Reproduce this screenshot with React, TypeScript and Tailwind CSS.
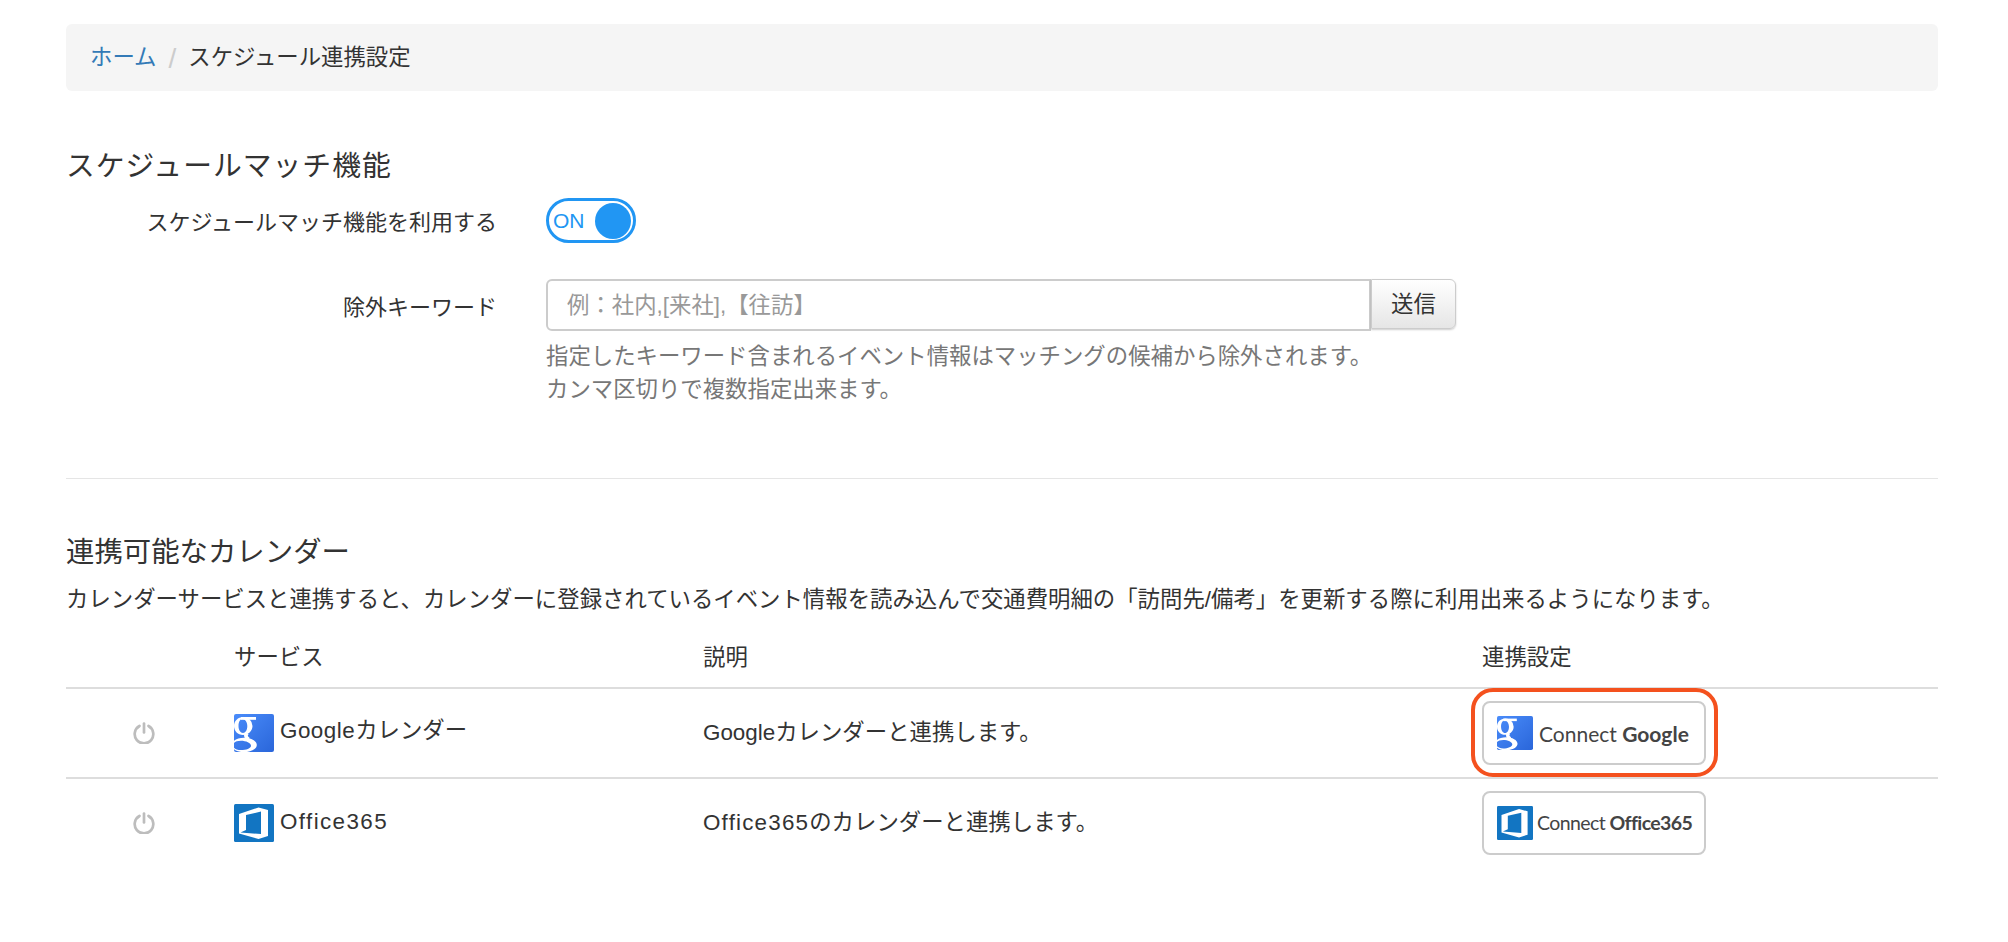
import React from "react";

const GoogleLogo = ({ w, h, id }: { w: number; h: number; id: string }) => (
  <svg width={w} height={h} viewBox="0 0 40 38" className="shrink-0">
    <defs>
      <linearGradient id={`grad${id}`} x1="0" y1="0" x2="1" y2="1">
        <stop offset="0" stopColor="#4a8cfa" />
        <stop offset="1" stopColor="#2a66da" />
      </linearGradient>
      <clipPath id={`clip${id}`}>
        <rect width="40" height="38" rx="2" />
      </clipPath>
    </defs>
    <g clipPath={`url(#clip${id})`}>
      <rect width="40" height="38" fill={`url(#grad${id})`} />
      <path fill="#fff" fillRule="evenodd" d="M9 3a9 9 0 0 1 9.500 9c0 5-4.500 9-9.500 9s-9-4-9-9 4-9 9-9zM8.500 5c-2.500 0-4 3-4 7s2 7 4.500 7 4.300-3 4.300-7S11 5 8.500 5z" />
      <rect x="7" y="3" width="15" height="2.800" fill="#fff" />
      <path d="M13 19c-2 2.500-1.500 4 1.500 6.500" fill="none" stroke="#fff" strokeWidth="4" />
      <path fill="#fff" fillRule="evenodd" d="M10 23.800c7 0 12.800 3.200 12.800 7.200S17 38.200 10 38.200-2.500 35-2.500 31 3 23.800 10 23.800zM7 26.800c-5 0-8 2-8 4.500s3 4.800 8 4.800 10-1.800 10-4.400-5-4.900-10-4.900z" />
    </g>
  </svg>
);

const OfficeLogo = ({ w, h }: { w: number; h: number }) => (
  <svg width={w} height={h} viewBox="0 0 40 38" className="shrink-0">
    <rect width="40" height="38" rx="1.500" fill="#1275c2" />
    <path fill="#fff" fillRule="evenodd" d="M5 10 24.500 3.500 34 6v26l-9.500 3L5 29.500zM12 11l15-3.500V30L6.500 28.500 12 26z" />
  </svg>
);

const Power = () => (
  <svg width="22" height="22" viewBox="0 0 22 22" fill="none" stroke="#bdbdbd" strokeWidth="2.700" strokeLinecap="round" className="shrink-0">
    <path d="M6.500 4a9.300 9.300 0 1 0 9 0" />
    <path d="M11 1.500v9" />
  </svg>
);

const rowGrid = "grid grid-cols-[168px_469px_779px_1fr] items-center";

export default function App() {
  return (
    <div className="min-h-[942px] bg-white pt-6 pl-[66px] pr-[70px] text-[22.4px] leading-none text-[#333] [font-family:'Liberation_Sans','Noto_Sans_CJK_JP',sans-serif]">
      <nav className="flex h-[67px] items-center rounded-md bg-[#f5f5f5] px-6 pt-[2px]">
        <a className="text-[#337ab7]">ホーム</a>
        <span className="mx-3 text-[28px] font-light text-[#ccc]">/</span>
        <span>スケジュール連携設定</span>
      </nav>

      <h2 className="mt-[55px] text-[28.8px] leading-[40px] tracking-[1px]">スケジュールマッチ機能</h2>

      <div className="mt-[12px] flex items-center">
        <div className="w-[431px] pt-[5px] text-right text-[22px]">スケジュールマッチ機能を利用する</div>
        <div className="ml-[49px] flex h-[45px] w-[90px] items-center justify-between rounded-full border-[3px] border-[#2196f3] pl-[4px] pr-[2px] text-[#2196f3]">
          <span className="text-[21px]">ON</span>
          <span className="h-[36px] w-[36px] rounded-full bg-[#2196f3]" />
        </div>
      </div>

      <div className="mt-9 flex">
        <div className="w-[431px] pt-[18px] text-right text-[22px]">除外キーワード</div>
        <div className="ml-[49px]">
          <div className="flex h-[52px] w-[910px]">
            <div className="flex flex-1 items-center rounded-l-md border-2 border-[#ccc] pl-[19px] pt-[3px] text-[#999]">例：社内,[来社],【往訪】</div>
            <div className="flex h-[50px] w-[85px] items-center justify-center rounded-r-md border border-[#ccc] bg-gradient-to-b from-white to-[#e6e6e6] pt-[3px] shadow-[0_1px_2px_rgba(0,0,0,0.2)]">送信</div>
          </div>
          <p className="mt-[9px] leading-[33px] text-[#777]">
            指定したキーワード含まれるイベント情報はマッチングの候補から除外されます。
            <br />
            カンマ区切りで複数指定出来ます。
          </p>
        </div>
      </div>

      <hr className="mt-[72px] border-t border-[#e5e5e5]" />

      <h2 className="mt-[53px] text-[28.4px] leading-[40px]">連携可能なカレンダー</h2>
      <p className="mt-[12px] leading-[32px]">カレンダーサービスと連携すると、カレンダーに登録されているイベント情報を読み込んで交通費明細の「訪問先/備考」を更新する際に利用出来るようになります。</p>

      <div className={`${rowGrid} mt-[11px] h-[62px] border-b-2 border-[#ddd] pt-[2px]`}>
        <span />
        <span>サービス</span>
        <span>説明</span>
        <span>連携設定</span>
      </div>

      <div className={`${rowGrid} h-[90px] border-b-2 border-[#ddd]`}>
        <span className="pl-[67px]"><Power /></span>
        <span className="flex items-center gap-[6px]">
          <GoogleLogo w={40} h={38} id="a" />
          <span className="-mt-[3px]"><span className="tracking-[0.5px]">Google</span>カレンダー</span>
        </span>
        <span>Googleカレンダーと連携します。</span>
        <div className="relative flex h-16 w-[224px] items-center rounded-lg border-2 border-[#ccc] pl-[13px]">
          <GoogleLogo w={36} h={36} id="b" />
          <span className="ml-[6px] text-[21px] text-[#444] [font-family:Lato,sans-serif]">Connect <b>Google</b></span>
          <span className="absolute -left-[13px] -right-[14px] -top-[15px] -bottom-[14px] rounded-[22px] border-4 border-[#f4511e]" />
        </div>
      </div>

      <div className={`${rowGrid} h-[88px]`}>
        <span className="pl-[67px]"><Power /></span>
        <span className="flex items-center gap-[6px]">
          <OfficeLogo w={40} h={38} />
          <span className="-mt-[2px] tracking-[1.4px]">Office365</span>
        </span>
        <span><span className="tracking-[1.2px]">Office365</span>のカレンダーと連携します。</span>
        <div className="flex h-16 w-[224px] items-center rounded-lg border-2 border-[#ccc] pl-[13px]">
          <OfficeLogo w={36} h={36} />
          <span className="ml-[4px] whitespace-nowrap text-[19.5px] tracking-[-0.6px] text-[#444] [font-family:Lato,sans-serif]">Connect <b>Office365</b></span>
        </div>
      </div>
    </div>
  );
}
